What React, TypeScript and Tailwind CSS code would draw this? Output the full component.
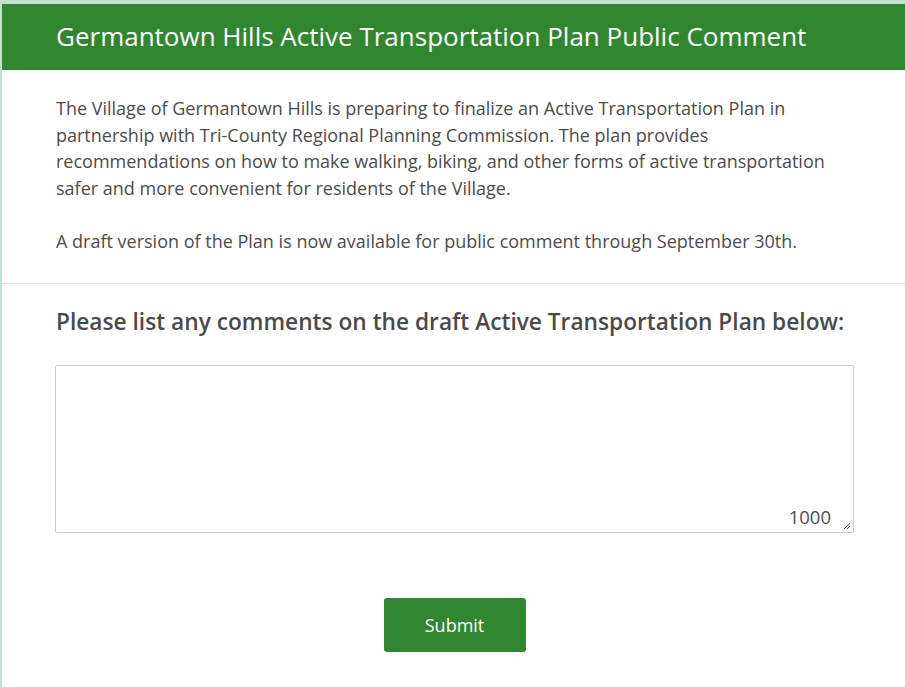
import React from "react";

export default function App() {
  return (
    <div
      className="w-[905px] h-[687px] overflow-hidden bg-[#bfe3d0] pt-[4px] pl-[2px]"
      style={{ fontFamily: "'Open Sans', Lato, sans-serif" }}
    >
      <div className="w-[905px] h-[683px] bg-white">
        <div className="h-[66px] bg-[#31872f] flex items-center pl-[54px] pb-[2px]">
          <h1 className="text-white text-[26px] leading-none whitespace-nowrap">
            Germantown Hills Active Transportation Plan Public Comment
          </h1>
        </div>
        <div className="px-[54px] pt-[25px] pb-[29px] text-[#4c4c4c] text-[18px] leading-[26.5px] whitespace-nowrap">
          The Village of Germantown Hills is preparing to finalize an Active Transportation Plan in
          <br />
          partnership with Tri-County Regional Planning Commission. The plan provides
          <br />
          recommendations on how to make walking, biking, and other forms of active transportation
          <br />
          safer and more convenient for residents of the Village.
          <br />
          <br />
          A draft version of the Plan is now available for public comment through September 30th.
        </div>
        <div className="h-px bg-[#e3e3e3]" />
        <div className="px-[53px] pt-[23px]">
          <h2 className="text-[#4a4a4a] text-[22.7px] font-semibold leading-[30px] whitespace-nowrap pl-[1px]">
            Please list any comments on the draft Active Transportation Plan below:
          </h2>
          <div className="relative mt-[28px] w-[799px] h-[168px] border border-[#cccccc] rounded-[2px]">
            <textarea className="w-full h-full resize-none outline-none p-2" />
            <span className="absolute right-[22px] bottom-[6px] text-[18.5px] text-[#4c4c4c] leading-none">
              1000
            </span>
            <svg
              className="absolute right-[2px] bottom-[2px]"
              width="8"
              height="8"
              viewBox="0 0 8 8"
            >
              <line x1="1" y1="7" x2="7" y2="1" stroke="#555" strokeWidth="1" />
              <line x1="4" y1="7" x2="7" y2="4" stroke="#555" strokeWidth="1" />
            </svg>
          </div>
          <div className="flex justify-center mt-[65px]">
            <button className="w-[142px] h-[54px] bg-[#31872f] text-white text-[18px] rounded-[3px]">
              Submit
            </button>
          </div>
        </div>
      </div>
    </div>
  );
}
